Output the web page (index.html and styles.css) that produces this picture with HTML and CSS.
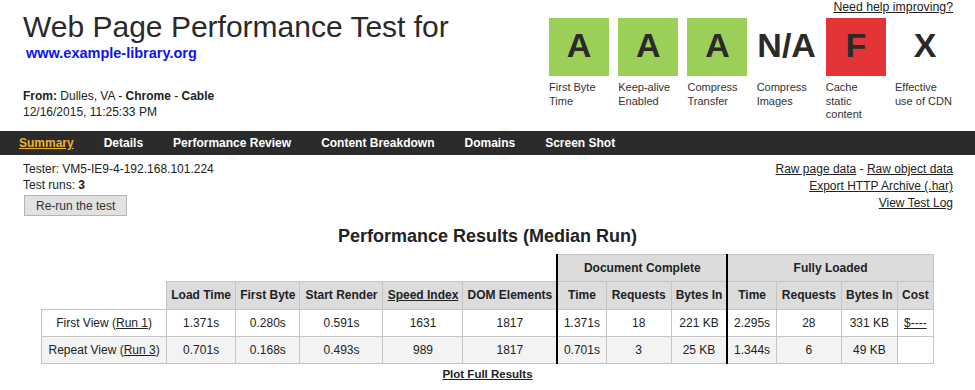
FILE: index.html
```html
<!DOCTYPE html>
<html lang="en">
<head>
    <meta charset="UTF-8">
    <meta name="viewport" content="width=device-width, initial-scale=1.0">
    <title>Web Page Performance Test</title>
    <link rel="stylesheet" href="styles.css">
</head>
<body>
  <div class="header">
    <div class="test-info">
      <h1>Web Page Performance Test for</h1>
      <a class="test-url" href="#">www.example-library.org</a>
      <div class="test-from">
        <div><b>From:</b> Dulles, VA - <b>Chrome</b> - <b>Cable</b></div>
        <div>12/16/2015, 11:25:33 PM</div>
      </div>
    </div>
    <div class="grades-block">
      <a class="help-link" href="#">Need help improving?</a>
      <ul class="grades">
        <li><div class="grade green">A</div><span>First Byte Time</span></li>
        <li><div class="grade green">A</div><span>Keep-alive Enabled</span></li>
        <li><div class="grade green">A</div><span>Compress Transfer</span></li>
        <li><div class="grade">N/A</div><span>Compress Images</span></li>
        <li><div class="grade red">F</div><span>Cache static content</span></li>
        <li><div class="grade">X</div><span>Effective use of CDN</span></li>
      </ul>
    </div>
  </div>

  <ul class="nav">
    <li><a class="current" href="#">Summary</a></li>
    <li><a href="#">Details</a></li>
    <li><a href="#">Performance Review</a></li>
    <li><a href="#">Content Breakdown</a></li>
    <li><a href="#">Domains</a></li>
    <li><a href="#">Screen Shot</a></li>
  </ul>

  <div class="run-info">
    <div class="tester">
      <div>Tester: VM5-IE9-4-192.168.101.224</div>
      <div>Test runs: <b>3</b></div>
      <button type="button">Re-run the test</button>
    </div>
    <div class="raw-links">
      <div><a href="#">Raw page data</a> - <a href="#">Raw object data</a></div>
      <div><a href="#">Export HTTP Archive (.har)</a></div>
      <div><a href="#">View Test Log</a></div>
    </div>
  </div>

  <h2>Performance Results (Median Run)</h2>
  <table class="results">
    <colgroup>
      <col style="width:125px"><col style="width:69px"><col style="width:64px"><col style="width:83px">
      <col style="width:80px"><col style="width:94px"><col style="width:49px"><col style="width:65px">
      <col style="width:56px"><col style="width:49px"><col style="width:65px"><col style="width:56px">
      <col style="width:36px">
    </colgroup>
    <thead>
      <tr>
        <th class="empty" colspan="6"></th>
        <th class="sep" colspan="3">Document Complete</th>
        <th class="sep" colspan="4">Fully Loaded</th>
      </tr>
      <tr>
        <th class="empty"></th>
        <th>Load Time</th>
        <th>First Byte</th>
        <th>Start Render</th>
        <th><a href="#">Speed Index</a></th>
        <th>DOM Elements</th>
        <th class="sep">Time</th>
        <th>Requests</th>
        <th>Bytes In</th>
        <th class="sep">Time</th>
        <th>Requests</th>
        <th>Bytes In</th>
        <th>Cost</th>
      </tr>
    </thead>
    <tbody>
      <tr>
        <td>First View (<a href="#">Run 1</a>)</td>
        <td>1.371s</td>
        <td>0.280s</td>
        <td>0.591s</td>
        <td>1631</td>
        <td>1817</td>
        <td class="sep">1.371s</td>
        <td>18</td>
        <td>221 KB</td>
        <td class="sep">2.295s</td>
        <td>28</td>
        <td>331 KB</td>
        <td><a href="#">$----</a></td>
      </tr>
      <tr class="alt">
        <td>Repeat View (<a href="#">Run 3</a>)</td>
        <td>0.701s</td>
        <td>0.168s</td>
        <td>0.493s</td>
        <td>989</td>
        <td>1817</td>
        <td class="sep">0.701s</td>
        <td>3</td>
        <td>25 KB</td>
        <td class="sep">1.344s</td>
        <td>6</td>
        <td>49 KB</td>
        <td class="blank"></td>
      </tr>
    </tbody>
  </table>
  <div class="plot-link"><a href="#">Plot Full Results</a></div>
</body>
</html>
```

FILE: styles.css
```css
body {
  margin: 0;
  font-family: 'Liberation Sans', Arial, sans-serif;
  font-size: 12px;
  color: #222;
  background-color: #fff;
}
a {
  color: #222;
}
.header {
  display: flex;
  justify-content: space-between;
  height: 131px;
}
.test-info {
  padding-left: 23px;
}
h1 {
  margin: 10px 0 0 0;
  font-size: 30px;
  line-height: 34px;
  font-weight: normal;
  color: #2a2a2a;
}
.test-url {
  display: block;
  margin: 1px 0 0 3px;
  font-size: 14.5px;
  line-height: 16px;
  font-weight: bold;
  color: #0a14f0;
  text-decoration: none;
}
.test-from {
  margin-top: 27px;
  line-height: 16px;
}
.grades-block {
  display: flex;
  flex-direction: column;
  align-items: flex-end;
  padding-right: 20px;
}
.help-link {
  margin-right: 2px;
  font-size: 12.3px;
  line-height: 15px;
}
.grades {
  display: flex;
  gap: 9.2px;
  list-style: none;
  margin: 3px 0 0 0;
  padding: 0;
}
.grades li {
  width: 60px;
  font-size: 11px;
  line-height: 13.5px;
  color: #333;
}
.grades span {
  display: block;
  margin-top: 5px;
}
.grade {
  height: 58px;
  line-height: 55px;
  text-align: center;
  font-size: 34px;
  font-weight: bold;
  color: #2a2a2a;
}
.grade.green {
  background-color: #9bcf58;
}
.grade.red {
  background-color: #e33537;
}
.nav {
  display: flex;
  list-style: none;
  margin: 0;
  padding: 0 0 0 4px;
  height: 24px;
  background-color: #2b2b2b;
}
.nav a {
  display: block;
  padding: 0 15px;
  line-height: 24px;
  font-weight: bold;
  color: #fff;
  text-decoration: none;
}
.nav a.current {
  color: #efb429;
  text-decoration: underline;
}
.run-info {
  display: flex;
  justify-content: space-between;
  padding: 6px 22px 0 23px;
}
.tester {
  line-height: 16px;
}
.tester button {
  display: block;
  margin: 2px 0 0 1px;
  height: 21px;
  padding: 0 11px;
  font-family: inherit;
  font-size: 12px;
  color: #333;
  background-color: #e1e1e1;
  border: 1px solid #b5b5b5;
}
.raw-links {
  text-align: right;
  line-height: 17px;
}
h2 {
  margin: 10px 0 8px 0;
  text-align: center;
  font-size: 18px;
  line-height: 20px;
  color: #222;
}
.results {
  margin: 0 auto;
  border-collapse: collapse;
  table-layout: fixed;
}
.results th,
.results td {
  padding: 6px 4px;
  line-height: 14.3px;
  text-align: center;
  border: 1px solid #c4c4c4;
  white-space: nowrap;
}
.results th {
  background-color: #dcdcdc;
  font-weight: bold;
}
.results th.empty {
  background-color: transparent;
  border: none;
}
.results .sep {
  border-left: 2px solid #000;
}
.results td {
  background-color: #fff;
}
.results tr.alt td {
  background-color: #f3f3f3;
}
.results tr.alt td.blank {
  background-color: #fff;
}
.plot-link {
  margin-top: 3px;
  text-align: center;
  font-size: 11.5px;
  line-height: 14px;
  font-weight: bold;
}
```
